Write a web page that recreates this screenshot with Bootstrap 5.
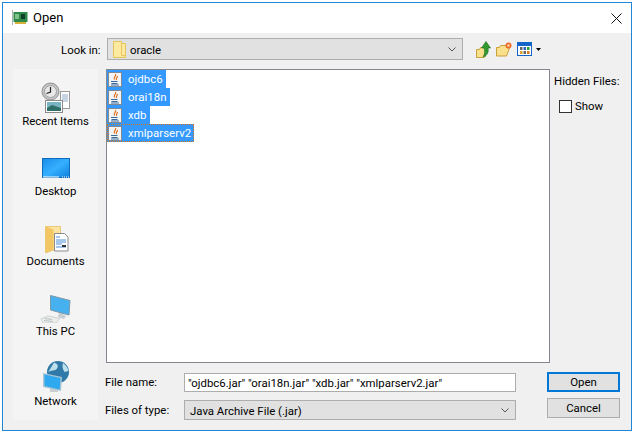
<!DOCTYPE html>
<html lang="en">
<head>
<meta charset="utf-8">
<title>Open</title>
<link href="https://cdn.jsdelivr.net/npm/bootstrap@5.3.0/dist/css/bootstrap.min.css" rel="stylesheet">
<style>
html,body{height:100%;margin:0;background:#fff;overflow:hidden}
body{padding:2px 2px 1px 2px;font:11.4px/16px Roboto,"Noto Sans",sans-serif;color:#000}
.win{width:630px;height:429px;border:1px solid #1f86d8;background:#f0f0f0}
.tbar{height:30px;background:#fff;padding-left:9px;gap:5px;font-size:13px;color:#000}
.tbar .closex{margin-left:auto;margin-right:9px}
.lookrow{height:22px;margin-top:5px;padding-left:58px}
.looklabel{width:46px;flex:none;padding-top:1px}
.combo{height:22px;background:#e1e1e1;border:1px solid #adadad;padding:0 6px 0 5px;color:#000}
.combo.wide{width:356px;gap:4px}
.combo span,.txtbox span{padding-top:1px}
.chev{margin-left:auto}
.tools{gap:5px;margin-left:13px}
.mainrow{margin-top:9px;padding-left:10px}
.places{width:85px;height:351px;background:#f4f4f4;flex:none}
.place{height:70px;padding-top:12px;text-align:center}
.place svg{display:block;margin:0 auto}
.rightcol{margin-left:8px;width:514px}
.filelist{width:444px;height:294px;background:#fff;border:1px solid #828790;flex:none}
.fileitem{height:18px;width:fit-content;background:#3399ff;color:#fff;padding:0 3px 0 1px;gap:6px;font-size:11.4px;letter-spacing:.05px}
.fileitem.focusd{background:
  repeating-linear-gradient(90deg,#d8741a 0 1px,transparent 1px 2px) top/100% 1px no-repeat,
  repeating-linear-gradient(90deg,#d8741a 0 1px,transparent 1px 2px) bottom/100% 1px no-repeat,
  repeating-linear-gradient(0deg,#d8741a 0 1px,transparent 1px 2px) left/1px 100% no-repeat,
  repeating-linear-gradient(0deg,#d8741a 0 1px,transparent 1px 2px) right/1px 100% no-repeat,
  #3399ff}
.hiddenbox{padding:4px 0 0 4px;white-space:nowrap}
.chk{width:13px;height:13px;border:1px solid #333;background:#fff;display:block;flex:none}
.showrow{gap:3px;margin:9px 0 0 5px}
.formgrid{display:grid;grid-template-columns:78px 332px 73px;margin-top:9px;margin-left:-1px}
.txtbox{height:19px;background:#fff;border:1px solid #adadad;padding:0 3px;color:#000;width:332px;margin-left:1px}
.fbtn{width:73px;height:20px;padding:0;font:inherit;line-height:16px;border:1px solid #adadad;background:#e1e1e1;color:#000;border-radius:0;margin-left:32px}
.fbtn.def{border:2px solid #0078d7}
.row2{margin-top:8px}
.combo.typ{width:332px;height:20px;margin-left:1px}
.fbtn.cancelbtn{margin-top:6px;align-self:start}
</style>
</head>
<body>
<div class="win d-flex flex-column">
  <div class="tbar d-flex align-items-center">
    <svg width="16" height="16" viewBox="0 0 16 16"><rect x="0" y="0" width="1" height="15" fill="#a8b4b4"/><rect x="1.500" y="2" width="14" height="10" fill="#2f8a4a"/><rect x="3" y="4" width="4" height="5" fill="#7fc28a"/><rect x="9" y="4" width="4" height="5" fill="#123f2a"/><rect x="3" y="12" width="11" height="2" fill="#d6b23a"/></svg>
    <span>Open</span>
    <svg class="closex" width="11" height="11" viewBox="0 0 11 11"><path d="M.5.5l10 10M10.500.5l-10 10" stroke="#111" fill="none"/></svg>
  </div>
  <div class="lookrow d-flex align-items-center">
    <span class="looklabel">Look in:</span>
    <div class="combo wide d-flex align-items-center">
      <svg width="13" height="17" viewBox="0 0 13 17"><path d="M.5.5h8v2h4v14H.5z" fill="#fde9a0" stroke="#e8c45c"/><path d="M8.500.5v14h4" fill="none" stroke="#e8c45c"/></svg>
      <span>oracle</span>
      <svg class="chev" width="8" height="5" viewBox="0 0 8 5"><path d="M.5.5L4 4 7.500.5" stroke="#555" fill="none"/></svg>
    </div>
    <div class="tools d-flex align-items-center">
      <svg width="15" height="17" viewBox="0 0 15 17"><path d="M.5 8.500h3l1-2h5v9l-2 1H.5z" fill="#f9e08c" stroke="#c9a13c"/><path d="M7 16c2-3 2-6 1-9H5.500L10 .5 14.500 7H12c1 4-1 8-5 9z" fill="#2f9a2f" stroke="#1c6a1c" stroke-width=".6"/></svg>
      <svg width="16" height="15" viewBox="0 0 16 15"><path d="M.5 5.500h3l1-2h6v2l3 .5-3 8H.5z" fill="#f9e08c" stroke="#c9a13c"/><circle cx="12.500" cy="3.500" r="3" fill="#ee6a28"/><circle cx="12.500" cy="3.500" r="1.300" fill="#fcd9a0"/></svg>
      <span class="d-flex align-items-center gap-1">
      <svg width="15" height="14" viewBox="0 0 15 14"><rect x=".5" y=".5" width="14" height="13" fill="#fff" stroke="#1565c8"/><rect x="1" y="1" width="13" height="3" fill="#1565c8"/><rect x="3" y="5" width="2.500" height="3" fill="#666"/><rect x="6.500" y="5" width="2.500" height="3" fill="#2a62c0"/><rect x="10" y="5" width="2.500" height="3" fill="#2a9a3a"/><rect x="3" y="9" width="2.500" height="3" fill="#d8a030"/><rect x="6.500" y="9" width="2.500" height="3" fill="#666"/><rect x="10" y="9" width="2.500" height="3" fill="#d87a20"/></svg>
      <svg width="5" height="3" viewBox="0 0 5 3"><path d="M0 0h5L2.500 3z" fill="#000"/></svg>
      </span>
    </div>
  </div>
  <div class="mainrow d-flex">
    <div class="places d-flex flex-column">
      <div class="place">
        <svg width="32" height="32" viewBox="0 0 32 32"><rect x="20.500" y="10.500" width="9" height="17" fill="#fff" stroke="#9a9a9a"/><path d="M22 14h6M22 16h6M22 18h6M22 20h6" stroke="#8fa8c8"/><circle cx="10.500" cy="10.500" r="8.500" fill="#c4c6c8" stroke="#909090"/><circle cx="10.500" cy="10.500" r="6" fill="#e8e8e8" stroke="#a0a0a0"/><path d="M10.500 6v5l-4 1.500" stroke="#222" stroke-width="1.200" fill="none"/><rect x="5.500" y="19.500" width="17" height="12" fill="#fff" stroke="#8a8a8a"/><rect x="7" y="21" width="14" height="9" fill="#79b4c2"/><path d="M7 27l5-3 9 3v3H7z" fill="#2f6f68"/></svg>
        <div>Recent Items</div>
      </div>
      <div class="place">
        <svg width="32" height="32" viewBox="0 0 32 32"><defs><linearGradient id="dg" x1="0" y1="0" x2="1" y2="1"><stop offset="0" stop-color="#1a8ce8"/><stop offset=".5" stop-color="#35b0ff"/><stop offset="1" stop-color="#0f7fdc"/></linearGradient></defs><rect x="2.500" y="7.500" width="27" height="19" fill="url(#dg)" stroke="#0f6cbc"/><path d="M3 26h16M22 26h1M24 26h1M26 26h1M28 26h1" stroke="#fff"/></svg>
        <div>Desktop</div>
      </div>
      <div class="place">
        <svg width="32" height="32" viewBox="0 0 32 32"><path d="M5.500 5.500h15v21l-15 5.500z" fill="#fbe3a0" stroke="#e8c878"/><path d="M5.500 5.500l8 3v20l-8 3.500z" fill="#f2c763"/><path d="M14.500 12.500h10l3.500 3.500v14H14.500z" fill="#fff" stroke="#8a8a8a"/><path d="M16 16h4M16 19h10M16 21h10M16 23h6M16 26h10" stroke="#4a90d8"/><rect x="22" y="24" width="4" height="2" fill="#333"/></svg>
        <div>Documents</div>
      </div>
      <div class="place">
        <svg width="32" height="32" viewBox="0 0 32 32"><path d="M19 21l-1 5 6 2 2-3z" fill="#c8cfd2"/><path d="M10.500 4.500l19.500 5-1 14.500-18.500-5z" fill="#47b0ee" stroke="#7a98a8"/><path d="M1 28l7-3 12 2.500-4 4.500H3z" fill="#eceeee" stroke="#cfd2d2"/><path d="M5 27.500l7 1M4 29.500l9 1" stroke="#bcc0c0"/></svg>
        <div>This PC</div>
      </div>
      <div class="place">
        <svg width="32" height="32" viewBox="0 0 32 32"><circle cx="18" cy="11" r="11" fill="#2f7aa8"/><path d="M14 1.500c3 1 5 3 3 6s-6 1-9 4M23 2c3 2 5 5 5.500 8l-4 1c-2-3-2.500-6-1.500-9z" fill="#bfe0ea"/><rect x="10" y="27" width="8" height="4" fill="#c8cfd2"/><path d="M3 12l19 4-1 14-18-4z" fill="#a8c4d4"/><path d="M4.500 13.500l16 3.500-.8 11.500-15.200-3.500z" fill="#2ea8ee"/></svg>
        <div>Network</div>
      </div>
    </div>
    <div class="rightcol d-flex flex-column">
      <div class="d-flex">
        <div class="filelist">
          <div class="fileitem d-flex align-items-center">
            <svg width="14" height="15" viewBox="0 0 14 15"><rect x=".5" y=".5" width="13" height="14" fill="#f2f4f6" stroke="#7f8a94"/><path d="M7.500 2c1.500 2-2.500 3-1 5.500M9.500 4c0 2-2 2-1 4" stroke="#e2701a" stroke-width="1.200" fill="none"/><path d="M3 9.500h6.500M3.500 11.500h6M3 13h8" stroke="#3a6a9c"/></svg>
            <span>ojdbc6</span>
          </div>
          <div class="fileitem d-flex align-items-center">
            <svg width="14" height="15" viewBox="0 0 14 15"><rect x=".5" y=".5" width="13" height="14" fill="#f2f4f6" stroke="#7f8a94"/><path d="M7.500 2c1.500 2-2.500 3-1 5.500M9.500 4c0 2-2 2-1 4" stroke="#e2701a" stroke-width="1.200" fill="none"/><path d="M3 9.500h6.500M3.500 11.500h6M3 13h8" stroke="#3a6a9c"/></svg>
            <span>orai18n</span>
          </div>
          <div class="fileitem d-flex align-items-center">
            <svg width="14" height="15" viewBox="0 0 14 15"><rect x=".5" y=".5" width="13" height="14" fill="#f2f4f6" stroke="#7f8a94"/><path d="M7.500 2c1.500 2-2.500 3-1 5.500M9.500 4c0 2-2 2-1 4" stroke="#e2701a" stroke-width="1.200" fill="none"/><path d="M3 9.500h6.500M3.500 11.500h6M3 13h8" stroke="#3a6a9c"/></svg>
            <span>xdb</span>
          </div>
          <div class="fileitem focusd d-flex align-items-center">
            <svg width="14" height="15" viewBox="0 0 14 15"><rect x=".5" y=".5" width="13" height="14" fill="#f2f4f6" stroke="#7f8a94"/><path d="M7.500 2c1.500 2-2.500 3-1 5.500M9.500 4c0 2-2 2-1 4" stroke="#e2701a" stroke-width="1.200" fill="none"/><path d="M3 9.500h6.500M3.500 11.500h6M3 13h8" stroke="#3a6a9c"/></svg>
            <span>xmlparserv2</span>
          </div>
        </div>
        <div class="hiddenbox">
          <div>Hidden Files:</div>
          <div class="showrow d-flex align-items-center"><span class="chk"></span><span>Show</span></div>
        </div>
      </div>
      <div class="formgrid align-items-center">
        <span>File name:</span>
        <div class="txtbox d-flex align-items-center"><span>"ojdbc6.jar" "orai18n.jar" "xdb.jar" "xmlparserv2.jar"</span></div>
        <button type="button" class="btn fbtn def">Open</button>
        <span class="row2">Files of type:</span>
        <div class="combo typ d-flex align-items-center row2">
          <span>Java Archive File (.jar)</span>
          <svg class="chev" width="8" height="5" viewBox="0 0 8 5"><path d="M.5.5L4 4 7.500.5" stroke="#555" fill="none"/></svg>
        </div>
        <button type="button" class="btn fbtn cancelbtn">Cancel</button>
      </div>
    </div>
  </div>
</div>
<script src="https://cdn.jsdelivr.net/npm/bootstrap@5.3.0/dist/js/bootstrap.bundle.min.js"></script>
</body>
</html>
